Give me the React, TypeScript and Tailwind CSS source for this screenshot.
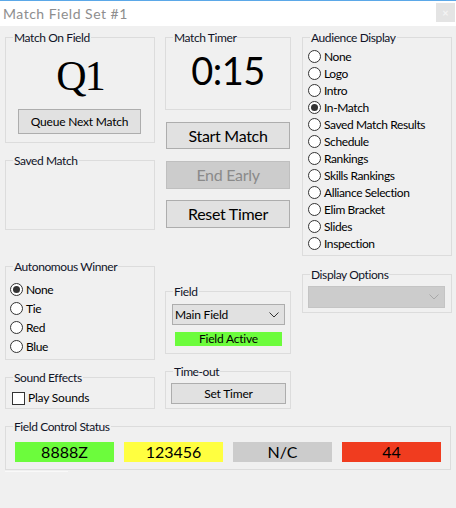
import type { ReactNode } from "react"

const ui = "[font-family:Lato,'Noto_Sans',sans-serif]"

function Group({ label, className, children }: { label: string; className: string; children?: ReactNode }) {
  return (
    <div className={`border border-[#dcdcdc] ${className}`}>
      <div className="-mt-[7px] ml-[7px] h-[14px] w-fit bg-[#f0f0f0] px-[1px] text-[12px] leading-[14px] tracking-[-0.4px] text-[#101428]">
        {label}
      </div>
      {children}
    </div>
  )
}

function Button({ label, className, disabled }: { label: string; className: string; disabled?: boolean }) {
  return (
    <div
      className={`flex items-center justify-center border ${
        disabled ? "border-[#bfbfbf] bg-[#cccccc] text-[#8a8a8a]" : "border-[#adadad] bg-[#e1e1e1] text-black"
      } ${className}`}
    >
      {label}
    </div>
  )
}

function Radio({ label, checked, className }: { label: string; checked?: boolean; className: string }) {
  return (
    <div className={`flex items-center text-[12px] tracking-[-0.4px] text-black ${className}`}>
      <div className="flex h-[13px] w-[13px] items-center justify-center rounded-full border border-[#333333] bg-white">
        {checked && <div className="h-[7px] w-[7px] rounded-full bg-[#333333]" />}
      </div>
      <span className="ml-[3px]">{label}</span>
    </div>
  )
}

function Chevron({ color }: { color: string }) {
  return (
    <svg width="10" height="6" viewBox="0 0 10 6" fill="none">
      <path d="M0.5 0.5 L5 5 L9.5 0.5" stroke={color} strokeWidth="1" />
    </svg>
  )
}

const audience = [
  "None",
  "Logo",
  "Intro",
  "In-Match",
  "Saved Match Results",
  "Schedule",
  "Rankings",
  "Skills Rankings",
  "Alliance Selection",
  "Elim Bracket",
  "Slides",
  "Inspection",
]

const status = [
  { text: "8888Z", bg: "bg-[#6cfc3c]" },
  { text: "123456", bg: "bg-[#ffff40]" },
  { text: "N/C", bg: "bg-[#cccccc]" },
  { text: "44", bg: "bg-[#f03c1f]" },
]

export default function App() {
  return (
    <div className={`h-[508px] w-[456px] overflow-hidden bg-[#f0f0f0] ${ui}`}>
      <div className="h-px bg-[#5ba8e8]" />
      <div className="flex h-[25px] items-start justify-between bg-white">
        <div className="ml-[3px] mt-[4px] text-[14px] leading-[17px] tracking-[0.5px] text-[#8e8e8e]">Match Field Set #1</div>
        <div className="mr-px mt-[2px] flex h-[19px] w-[19px] items-center justify-center bg-[#e4e4e4] text-[11px] font-bold leading-none text-[#f4f4f4]">
          ×
        </div>
      </div>

      <div className="flex pt-[11px]">
        {/* left column */}
        <div className="ml-[5px] flex w-[150px] flex-col">
          <Group label="Match On Field" className="h-[106px]">
            <div className="mt-[9px] h-[44px] text-center [font-family:'Liberation_Serif',serif] text-[42px] leading-[44px] tracking-[-2px] text-black">
              Q1
            </div>
            <Button label="Queue Next Match" className="ml-[12px] mt-[11px] h-[25px] w-[123px] text-[12px] tracking-[-0.2px]" />
          </Group>
          <Group label="Saved Match" className="mt-[17px] h-[70px]" />
          <Group label="Autonomous Winner" className="mt-[36px] h-[94px]">
            <div className="mt-[6px] ml-[4px] flex flex-col">
              <Radio label="None" checked className="h-[19px]" />
              <Radio label="Tie" className="h-[19px]" />
              <Radio label="Red" className="h-[19px]" />
              <Radio label="Blue" className="h-[19px]" />
            </div>
          </Group>
          <Group label="Sound Effects" className="mt-[17px] h-[32px]">
            <div className="ml-[6px] mt-[4px] flex items-center text-[12px] tracking-[-0.2px] text-black">
              <div className="h-[13px] w-[13px] border border-[#333333] bg-white" />
              <span className="ml-[3px]">Play Sounds</span>
            </div>
          </Group>
        </div>

        {/* middle column */}
        <div className="ml-[10px] flex w-[126px] flex-col">
          <Group label="Match Timer" className="h-[73px]">
            <div className="mt-[5px] h-[40px] text-center text-[38px] leading-[40px] tracking-[-0.5px] text-black">0:15</div>
          </Group>
          <Button label="Start Match" className="ml-px mt-[12px] h-[27px] w-[124px] text-[16px] tracking-[-0.3px]" />
          <Button label="End Early" disabled className="ml-px mt-[12px] h-[28px] w-[124px] text-[16px] tracking-[-0.3px]" />
          <Button label="Reset Timer" className="ml-px mt-[11px] h-[28px] w-[124px] text-[16px] tracking-[-0.3px]" />
          <Group label="Field" className="mt-[63px] h-[63px]">
            <div className="ml-[6px] mt-[5px] flex h-[21px] w-[113px] items-center justify-between border border-[#adadad] bg-[#e1e1e1] pl-[2px] pr-[5px] text-[12px] tracking-[-0.2px] text-black">
              <span>Main Field</span>
              <Chevron color="#333333" />
            </div>
            <div className="ml-[9px] mt-[7px] flex h-[14px] w-[107px] items-center justify-center bg-[#6cfc3c] text-[12px] tracking-[-0.2px] text-black">
              Field Active
            </div>
          </Group>
          <Group label="Time-out" className="mt-[17px] h-[38px]">
            <Button label="Set Timer" className="ml-[5px] mt-[4px] h-[21px] w-[115px] text-[12px] tracking-[-0.2px]" />
          </Group>
        </div>

        {/* right column */}
        <div className="ml-[11px] flex w-[150px] flex-col">
          <Group label="Audience Display" className="h-[219px]">
            <div className="ml-[5px] mt-[3px] flex flex-col">
              {audience.map((a) => (
                <Radio key={a} label={a} checked={a === "In-Match"} className="h-[17px]" />
              ))}
            </div>
          </Group>
          <Group label="Display Options" className="mt-[18px] h-[39px]">
            <div className="ml-[5px] mt-[4px] flex h-[22px] w-[137px] items-center justify-end border border-[#c4c4c4] bg-[#cccccc] pr-[5px]">
              <Chevron color="#a8a8a8" />
            </div>
          </Group>
        </div>
      </div>

      <Group label="Field Control Status" className="ml-[5px] mt-[17px] h-[44px] w-[446px]">
        <div className="ml-[9px] mt-[8px] flex gap-[10px]">
          {status.map((s) => (
            <div
              key={s.text}
              className={`flex h-[20px] w-[99px] items-center justify-center text-[16px] text-black ${s.bg}`}
            >
              {s.text}
            </div>
          ))}
        </div>
      </Group>
      <div className="ml-[5px] mt-px h-px w-[63px] bg-[#f9f9f9]" />
    </div>
  )
}
